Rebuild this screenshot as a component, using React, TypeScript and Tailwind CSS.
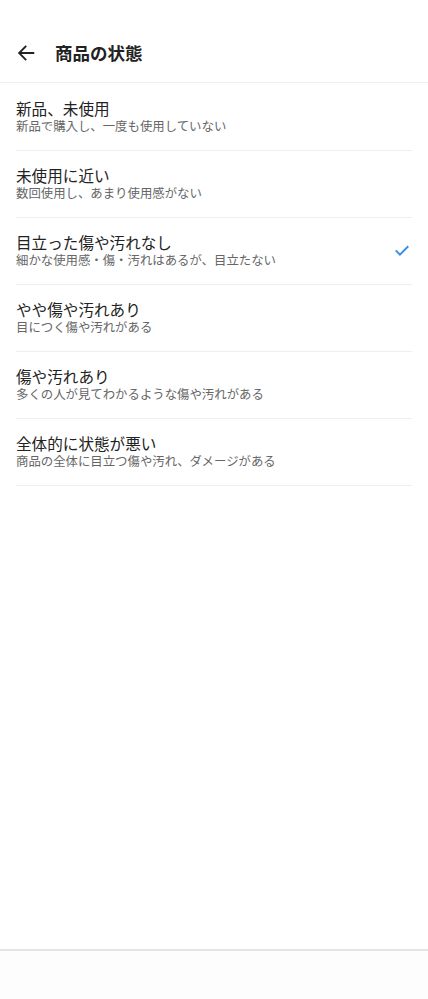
import React from "react";

const items = [
  { t: "新品、未使用", s: "新品で購入し、一度も使用していない" },
  { t: "未使用に近い", s: "数回使用し、あまり使用感がない" },
  { t: "目立った傷や汚れなし", s: "細かな使用感・傷・汚れはあるが、目立たない", checked: true },
  { t: "やや傷や汚れあり", s: "目につく傷や汚れがある" },
  { t: "傷や汚れあり", s: "多くの人が見てわかるような傷や汚れがある" },
  { t: "全体的に状態が悪い", s: "商品の全体に目立つ傷や汚れ、ダメージがある" },
];

export default function App() {
  return (
    <div
      className="w-[428px] h-[999px] bg-white flex flex-col"
      style={{ fontFamily: '"Noto Sans CJK JP", "Noto Sans", sans-serif' }}
    >
      <header className="h-[83px] shrink-0 border-b border-[#eeeeee] flex items-end pb-[17px] pl-[15px]">
        <div className="flex items-center h-[24px]">
          <svg width="22" height="22" viewBox="0 0 24 24" className="text-[#222]">
            <path d="M20 12H5M11.5 5l-7 7 7 7" fill="none" stroke="currentColor" strokeWidth="2" strokeLinecap="square" />
          </svg>
          <h1 className="ml-[18px] text-[17.5px] font-bold text-[#222] leading-[24px]">商品の状態</h1>
        </div>
      </header>
      <ul className="px-[16px] pt-[1px] flex-1">
        {items.map((it) => (
          <li key={it.t} className="flex items-center border-b border-[#eeeeee] pt-[14px] pb-[16px]">
            <div className="flex-1 min-w-0">
              <div className="text-[15.6px] leading-[20px] text-[#222]">{it.t}</div>
              <div className="text-[12.4px] leading-[16px] text-[#666]">{it.s}</div>
            </div>
            {it.checked && (
              <svg width="20" height="20" viewBox="0 0 24 24" className="mt-[0px]">
                <path d="M4.5 12.5l5 5 10-10" fill="none" stroke="#3b8ee8" strokeWidth="2.4" />
              </svg>
            )}
          </li>
        ))}
      </ul>
      <div className="h-[50px] shrink-0 border-t-2 border-[#e4e4e4] bg-[#fdfdfd]" />
    </div>
  );
}
